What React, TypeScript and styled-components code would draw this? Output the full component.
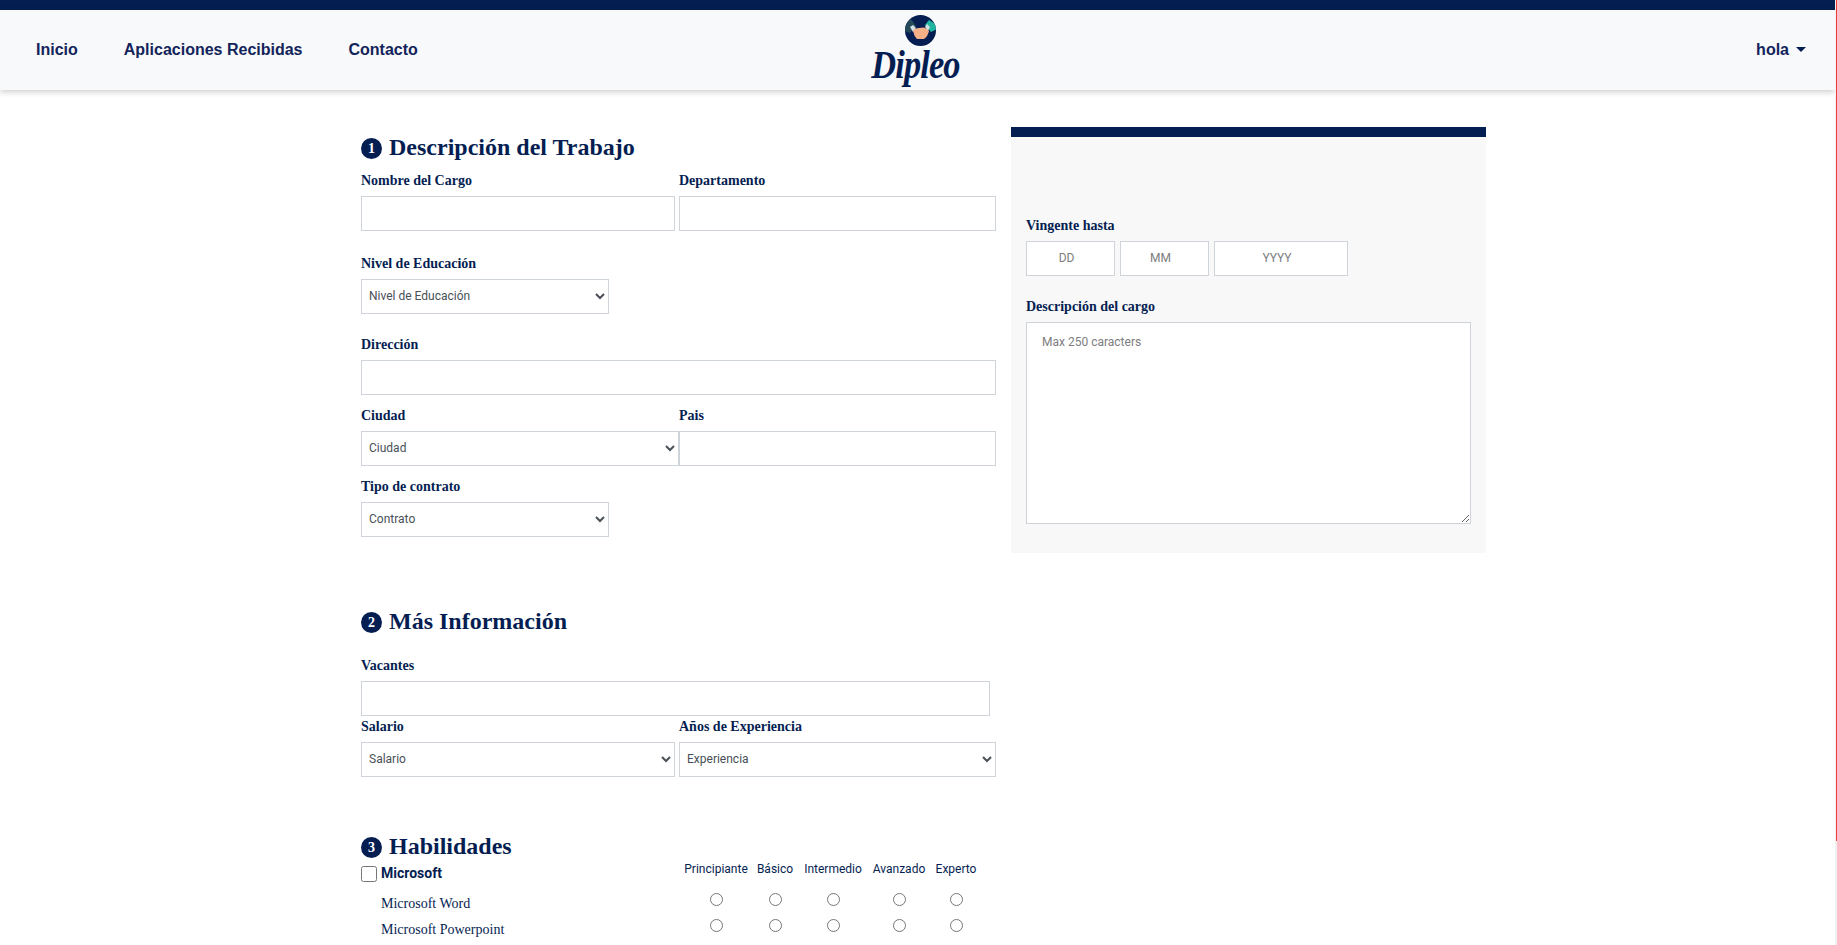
import React from 'react';
import styled, { createGlobalStyle } from 'styled-components';

const navy = '#051e52';
const line = '#ced4da';

const GlobalStyle = createGlobalStyle`
    html,body{
        margin:0;
        height:945px;
        overflow:hidden;
        background:#ffffff;
        font-family:"Roboto",sans-serif;
    }
    *{
        box-sizing:border-box;
    }
`

const Page = styled.div`
    width:1835px;
    height:945px;
    overflow:hidden;
`
const ScrollRail = styled.div`
    position:fixed;
    top:0;
    right:0;
    width:2px;
    height:945px;
    background-color:#f1f1f1;
`
const ScrollThumb = styled.div`
    width:1px;
    height:841px;
    margin-left:1px;
    background-color:#ef3d3d;
`
const TopBar = styled.div`
    height:10px;
    background-color:${navy};
`
const Nav = styled.nav`
    height:80px;
    background-color:#f8f9fa;
    box-shadow:0 2px 6px rgba(0,0,0,0.2);
    display:grid;
    grid-template-columns:1fr auto 1fr;
    align-items:center;
    padding:0 29px 0 36px;
`
const NavLinks = styled.div`
    display:flex;
    gap:46px;
`
const NavLink = styled.a`
    font-family:"Liberation Sans",sans-serif;
    font-size:16px;
    font-weight:700;
    color:#12245a;
`
const LogoBox = styled.div`
    display:flex;
    flex-direction:column;
    align-items:center;
    margin:-3px 0 0 -2px;
`
const LogoText = styled.span`
    font-family:"Liberation Serif",serif;
    font-style:italic;
    font-weight:700;
    font-size:40px;
    line-height:36px;
    letter-spacing:-1px;
    color:${navy};
    transform:scaleX(0.86);
    margin:1px 9px 0 0;
`
const UserMenu = styled.div`
    justify-self:end;
    display:flex;
    align-items:center;
    gap:7px;
    font-family:"Liberation Sans",sans-serif;
    font-size:16px;
    font-weight:700;
    color:#12245a;
`
const Caret = styled.span`
    border-top:5px solid ${navy};
    border-left:5px solid transparent;
    border-right:5px solid transparent;
    margin-top:-2px;
`
const Main = styled.main`
    display:flex;
    gap:15px;
    padding:37px 0 0 361px;
`
const FormColumn = styled.div`
    width:635px;
    padding-top:9px;
`
const Section = styled.section<{$gap?:number}>`
    margin-bottom:${({$gap})=>$gap ?? 0}px;
`
const Heading = styled.h2<{$mb?:number}>`
    display:flex;
    align-items:center;
    gap:7px;
    margin:0 0 ${({$mb})=>$mb ?? 0}px;
    height:24px;
    padding-bottom:2px;
    font-family:"Liberation Serif",serif;
    font-size:24px;
    font-weight:700;
    color:${navy};
`
const Badge = styled.span`
    width:21px;
    height:21px;
    border-radius:50%;
    background-color:${navy};
    color:#ffffff;
    font-size:14px;
    display:flex;
    align-items:center;
    justify-content:center;
    margin-top:3px;
`
const Row = styled.div`
    display:flex;
`
const Field = styled.div<{$width?:number;$mb?:number}>`
    width:${({$width})=>$width ? `${$width}px` : '100%'};
    margin-bottom:${({$mb})=>$mb ?? 0}px;
`
const Label = styled.label<{$mb?:number}>`
    display:block;
    font-family:"Liberation Serif",serif;
    font-size:14px;
    line-height:16px;
    font-weight:700;
    color:${navy};
    margin-bottom:${({$mb})=>$mb ?? 7}px;
`
const Input = styled.input<{$width?:number}>`
    display:block;
    width:${({$width})=>$width ? `${$width}px` : '100%'};
    height:35px;
    border:1px solid ${line};
    border-radius:0;
    background:#ffffff;
    outline:none;
`
const Select = styled.select<{$width?:number}>`
    display:block;
    width:${({$width})=>$width ? `${$width}px` : '100%'};
    height:35px;
    padding:0 3px 1px;
    border:1px solid ${line};
    border-radius:0;
    background-color:#ffffff;
    font-family:"Roboto",sans-serif;
    font-size:12px;
    color:#495057;
    outline:none;
`
const SidePanel = styled.aside`
    width:475px;
    height:426px;
    background-color:#f8f8f8;
    border-top:10px solid ${navy};
    padding:81px 15px 0;
`
const DateRow = styled.div`
    display:flex;
    gap:5px;
    margin-bottom:23px;
`
const DateInput = styled.input<{$width:number}>`
    width:${({$width})=>$width}px;
    height:35px;
    border:1px solid ${line};
    border-radius:0;
    padding:0 10px 2px 2px;
    text-align:center;
    font-family:"Roboto",sans-serif;
    font-size:12px;
    outline:none;
    &::placeholder{color:#7d7d80;opacity:1;}
`
const TextArea = styled.textarea`
    display:block;
    width:445px;
    height:202px;
    border:1px solid ${line};
    border-radius:0;
    padding:12px 15px;
    font-family:"Roboto",sans-serif;
    font-size:12px;
    outline:none;
    &::placeholder{color:#7d7d80;opacity:1;}
`
const SkillGrid = styled.div`
    display:grid;
    grid-template-columns:325px 60px 58px 58px 74px 40px;
    grid-template-rows:28px 26px 26px;
    margin-top:3px;
`
const GroupName = styled.label`
    display:flex;
    align-items:center;
    align-self:start;
    height:22px;
    gap:4px;
    font-family:"Roboto",sans-serif;
    font-size:14px;
    font-weight:700;
    color:${navy};
`
const Check = styled.input`
    width:16px;
    height:16px;
    margin:2px 0 0;
`
const LevelName = styled.span`
    font-family:"Roboto",sans-serif;
    font-size:12px;
    line-height:14px;
    color:${navy};
    text-align:center;
    white-space:nowrap;
    justify-self:center;
`
const SkillName = styled.span`
    font-family:"Liberation Serif",serif;
    font-size:14px;
    line-height:26px;
    color:${navy};
    padding:1px 0 0 20px;
`
const Radio = styled.input`
    width:13px;
    height:13px;
    margin:3px 0 0;
    justify-self:center;
`

const levels = ['Principiante','Básico','Intermedio','Avanzado','Experto']
const skills = ['Microsoft Word','Microsoft Powerpoint']

const Logo = () => (
    <LogoBox>
        <svg width="31" height="31" viewBox="0 0 31 31" aria-hidden="true">
            <clipPath id="logo-disc"><circle cx="15.5" cy="15.5" r="15.5"/></clipPath>
            <g clipPath="url(#logo-disc)">
                <rect width="31" height="31" fill={navy}/>
                <path d="M-1 9 L6 4 L11 11 L5 18 L-1 16 Z" fill="#24495a"/>
                <path d="M32 10 L24 5 L20 10 L26 17 L32 14 Z" fill="#1fb5a0"/>
                <path d="M5 12 L8 10 L11 13 L8 17 Z" fill="#d5dfe3"/>
                <path d="M25 12 L22 9 L20 12 L23 16 Z" fill="#d5dfe3"/>
                <path d="M8 16 Q10 13 14 13 L19 12.5 Q22 13.5 24 16 Q23 21 19 24 L12 24 Q9 21 8 16 Z" fill="#f6b088"/>
            </g>
        </svg>
        <LogoText>Dipleo</LogoText>
    </LogoBox>
)

const App = () => {
    return (
        <Page>
            <GlobalStyle/>
            <TopBar/>
            <Nav>
                <NavLinks>
                    <NavLink>Inicio</NavLink>
                    <NavLink>Aplicaciones Recibidas</NavLink>
                    <NavLink>Contacto</NavLink>
                </NavLinks>
                <Logo/>
                <UserMenu>hola <Caret/></UserMenu>
            </Nav>
            <Main>
                <FormColumn>
                    <Section $gap={73}>
                        <Heading $mb={13}><Badge>1</Badge>Descripción del Trabajo</Heading>
                        <Row>
                            <Field $width={318} $mb={25}>
                                <Label>Nombre del Cargo</Label>
                                <Input $width={314}/>
                            </Field>
                            <Field $width={317} $mb={25}>
                                <Label>Departamento</Label>
                                <Input/>
                            </Field>
                        </Row>
                        <Field $mb={23}>
                            <Label>Nivel de Educación</Label>
                            <Select $width={248}><option>Nivel de Educación</option></Select>
                        </Field>
                        <Field $mb={13}>
                            <Label>Dirección</Label>
                            <Input/>
                        </Field>
                        <Row>
                            <Field $width={318} $mb={13}>
                                <Label>Ciudad</Label>
                                <Select><option>Ciudad</option></Select>
                            </Field>
                            <Field $width={317} $mb={13}>
                                <Label>Pais</Label>
                                <Input/>
                            </Field>
                        </Row>
                        <Field>
                            <Label>Tipo de contrato</Label>
                            <Select $width={248}><option>Contrato</option></Select>
                        </Field>
                    </Section>
                    <Section $gap={58}>
                        <Heading $mb={24}><Badge>2</Badge>Más Información</Heading>
                        <Field $mb={3}>
                            <Label>Vacantes</Label>
                            <Input $width={629}/>
                        </Field>
                        <Row>
                            <Field $width={318}>
                                <Label>Salario</Label>
                                <Select $width={314}><option>Salario</option></Select>
                            </Field>
                            <Field $width={317}>
                                <Label>Años de Experiencia</Label>
                                <Select><option>Experiencia</option></Select>
                            </Field>
                        </Row>
                    </Section>
                    <Section>
                        <Heading><Badge>3</Badge>Habilidades</Heading>
                        <SkillGrid>
                            <GroupName><Check type="checkbox"/>Microsoft</GroupName>
                            {levels.map(level=><LevelName key={level}>{level}</LevelName>)}
                            {skills.map(skill=>(
                                <React.Fragment key={skill}>
                                    <SkillName>{skill}</SkillName>
                                    {levels.map(level=><Radio key={level} type="radio" name={skill}/>)}
                                </React.Fragment>
                            ))}
                        </SkillGrid>
                    </Section>
                </FormColumn>
                <SidePanel>
                    <Label>Vingente hasta</Label>
                    <DateRow>
                        <DateInput $width={89} placeholder="DD"/>
                        <DateInput $width={89} placeholder="MM"/>
                        <DateInput $width={134} placeholder="YYYY"/>
                    </DateRow>
                    <Label>Descripción del cargo</Label>
                    <TextArea placeholder="Max 250 caracters"/>
                </SidePanel>
            </Main>
            <ScrollRail><ScrollThumb/></ScrollRail>
        </Page>
    )
}

export default App
